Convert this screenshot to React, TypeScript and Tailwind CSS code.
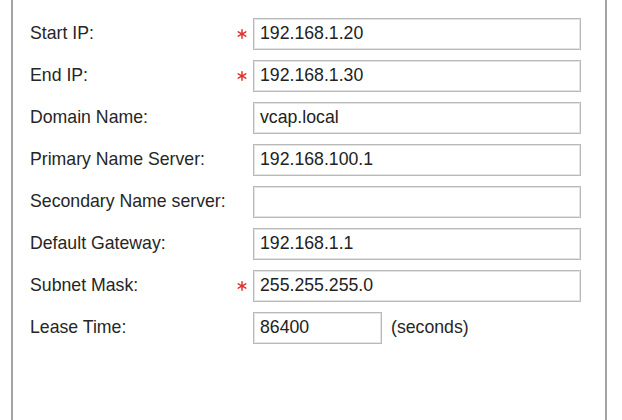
import React from "react";

type Row = { label: string; value: string; required?: boolean; short?: boolean; suffix?: string };

const rows: Row[] = [
  { label: "Start IP:", value: "192.168.1.20", required: true },
  { label: "End IP:", value: "192.168.1.30", required: true },
  { label: "Domain Name:", value: "vcap.local" },
  { label: "Primary Name Server:", value: "192.168.100.1" },
  { label: "Secondary Name server:", value: "" },
  { label: "Default Gateway:", value: "192.168.1.1" },
  { label: "Subnet Mask:", value: "255.255.255.0", required: true },
  { label: "Lease Time:", value: "86400", short: true, suffix: "(seconds)" },
];

function Star() {
  return (
    <svg width="10" height="10" viewBox="0 0 10 10" className="block">
      <g stroke="#e0302a" strokeWidth="1.5" strokeLinecap="round">
        <line x1="5" y1="0.8" x2="5" y2="9.2" />
        <line x1="1.2" y1="2.9" x2="8.8" y2="7.1" />
        <line x1="1.2" y1="7.1" x2="8.8" y2="2.9" />
      </g>
    </svg>
  );
}

export default function App() {
  return (
    <div
      className="w-[622px] h-[420px] bg-white flex text-[17.7px] text-[#262626]"
      style={{ fontFamily: '"Liberation Sans", Arial, Helvetica, sans-serif' }}
    >
      <div className="ml-[11px] w-[596px] h-full border-x-2 border-[#a3a3a3] pt-[18px] pl-[17px]">
        <div className="flex flex-col gap-[10px]">
          {rows.map((r) => (
            <div key={r.label} className="flex items-center h-[32px]">
              <div className="w-[207px] leading-none whitespace-nowrap">{r.label}</div>
              <div className="w-[16px] flex items-center">{r.required ? <Star /> : null}</div>
              <div
                className={`${r.short ? "w-[129px]" : "w-[328px]"} h-[32px] border border-[#b9b9b9] shadow-[inset_0_0_0_1px_#e4e4e4] bg-white flex items-center pl-[6px] text-[#222] leading-none`}
              >
                {r.value}
              </div>
              {r.suffix ? <div className="ml-[9px] leading-none">{r.suffix}</div> : null}
            </div>
          ))}
        </div>
      </div>
    </div>
  );
}
